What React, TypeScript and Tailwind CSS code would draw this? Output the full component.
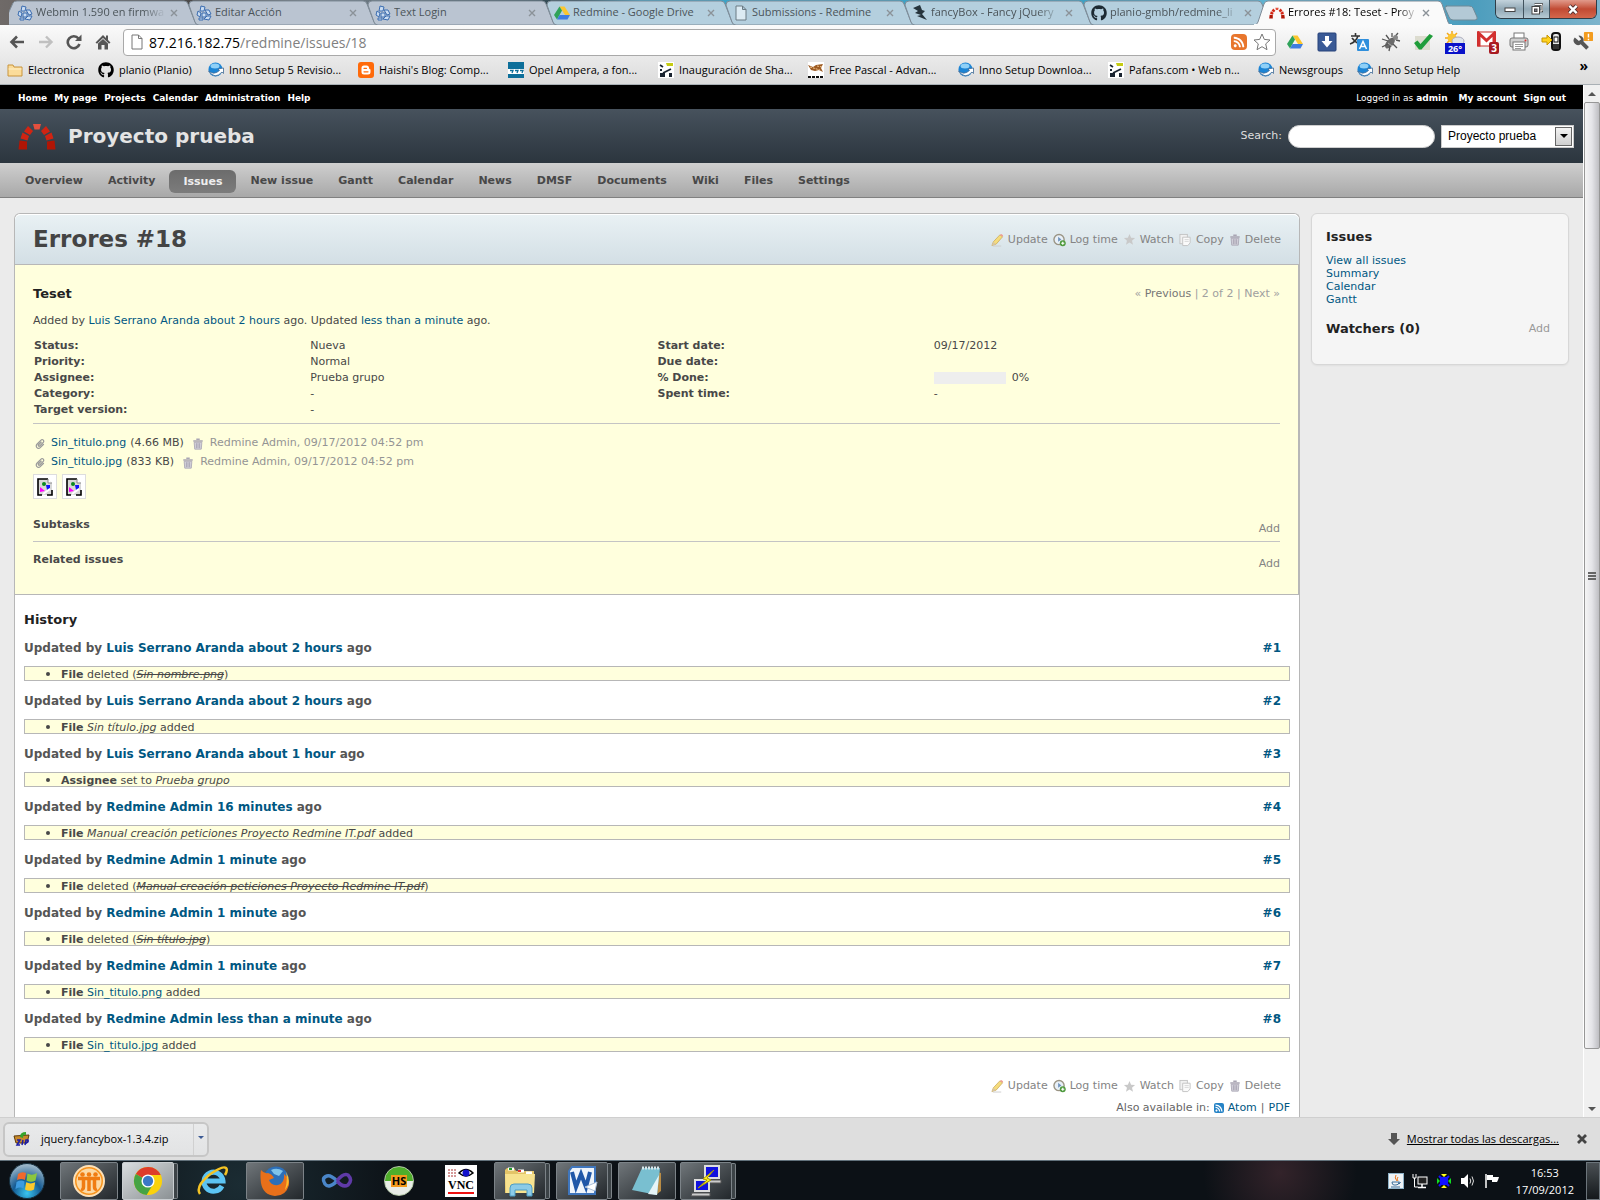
import type { ReactNode } from "react";
import { FaGithub, FaPaperclip, FaRss } from "react-icons/fa";

const UI_FONT = "font-['Open_Sans','Noto_Sans',sans-serif]";
const PAGE_FONT = "font-['DejaVu_Sans',sans-serif]";

type Tab = { title: string; icon: ReactNode; blue?: boolean; fade?: boolean };

const TABS: Tab[] = [
  { title: "Webmin 1.590 en firmwa", icon: <WebminIcon />, fade: true },
  { title: "Editar Acción", icon: <WebminIcon /> },
  { title: "Text Login", icon: <WebminIcon /> },
  { title: "Redmine - Google Drive", icon: <DriveIcon />, blue: true },
  { title: "Submissions - Redmine", icon: <PageIcon />, blue: true },
  { title: "fancyBox - Fancy jQuery", icon: <FancyIcon />, blue: true, fade: true },
  { title: "planio-gmbh/redmine_li", icon: <FaGithub className="h-4 w-4 text-[#1d2a33]" />, blue: true, fade: true },
];

const BOOKMARKS = [
  { label: "Electronica", icon: <FolderIcon />, width: "w-[91px]" },
  { label: "planio (Planio)", icon: <FaGithub className="h-4 w-4 text-black" />, width: "w-[110px]" },
  { label: "Inno Setup 5 Revisio...", icon: <InnoIcon />, width: "w-[150px]" },
  { label: "Haishi's Blog: Comp...", icon: <BloggerIcon />, width: "w-[150px]" },
  { label: "Opel Ampera, a fon...", icon: <AmperaIcon />, width: "w-[150px]" },
  { label: "Inauguración de Sha...", icon: <PafansIcon />, width: "w-[150px]" },
  { label: "Free Pascal - Advan...", icon: <PascalIcon />, width: "w-[150px]" },
  { label: "Inno Setup Downloa...", icon: <InnoIcon />, width: "w-[150px]" },
  { label: "Pafans.com • Web n...", icon: <PafansIcon />, width: "w-[150px]" },
  { label: "Newsgroups", icon: <InnoIcon />, width: "w-[99px]" },
  { label: "Inno Setup Help", icon: <InnoIcon />, width: "w-[110px]" },
];

const MENU = ["Overview", "Activity", "Issues", "New issue", "Gantt", "Calendar", "News", "DMSF", "Documents", "Wiki", "Files", "Settings"];

const HISTORY: { who: string; when: string; detail: ReactNode }[] = [
  { who: "Luis Serrano Aranda", when: "about 2 hours", detail: <><b>File</b> deleted (<del><i>Sin nombre.png</i></del>)</> },
  { who: "Luis Serrano Aranda", when: "about 2 hours", detail: <><b>File</b> <i>Sin título.jpg</i> added</> },
  { who: "Luis Serrano Aranda", when: "about 1 hour", detail: <><b>Assignee</b> set to <i>Prueba grupo</i></> },
  { who: "Redmine Admin", when: "16 minutes", detail: <><b>File</b> <i>Manual creación peticiones Proyecto Redmine IT.pdf</i> added</> },
  { who: "Redmine Admin", when: "1 minute", detail: <><b>File</b> deleted (<del><i>Manual creación peticiones Proyecto Redmine IT.pdf</i></del>)</> },
  { who: "Redmine Admin", when: "1 minute", detail: <><b>File</b> deleted (<del><i>Sin título.jpg</i></del>)</> },
  { who: "Redmine Admin", when: "1 minute", detail: <><b>File</b> <Link>Sin_titulo.png</Link> added</> },
  { who: "Redmine Admin", when: "less than a minute", detail: <><b>File</b> <Link>Sin_titulo.jpg</Link> added</> },
];

export default function App() {
  return (
    <div className={`flex min-h-screen flex-col overflow-hidden bg-[#ebebeb] ${PAGE_FONT}`}>
      <TabStrip />
      <Toolbar />
      <div className="flex flex-1">
        <div className="flex min-w-0 flex-1 flex-col">
          <TopMenu />
          <Header />
          <MainMenu />
          <div className="flex flex-1 items-start gap-[11px] px-[14px] pt-[15px]">
            <Issue />
            <Sidebar />
          </div>
        </div>
        <Scrollbar />
      </div>
      <DownloadShelf />
      <Taskbar />
    </div>
  );
}

/* ---------- browser ---------- */

function TabStrip() {
  return (
    <div
      className={`relative flex h-[25px] bg-[linear-gradient(90deg,#6f6a68_0,#4c4a4a_12%,#77818a_20%,#3f5560_33%,#27414a_36%,#3ea3c6_40%,#3fa0c2_70%,#62b4d2_80%,#4c9dbd_92%,#7db4cc_100%)] ${UI_FONT}`}
    >
      {TABS.map((t, i) => (
        <div key={i} className={`relative h-[25px] w-[179px] shrink-0 ${i === 0 ? "ml-[9px]" : ""}`}>
          <svg viewBox="0 0 190 25" className="absolute left-0 top-0 h-[25px] w-[190px]">
            <path
              d={i === 0 ? "M-6 25 L4 3 Q5 1 8 1 H175 Q178 1 179 4 L186 22 Q187 25 190 25 Z" : "M11 25 Q8 25 7 22 L1 5 Q1 1 5 1 H175 Q178 1 179 4 L186 22 Q187 25 190 25 Z"}
              fill={t.blue ? "#b4cfde" : "#bac4d1"}
              stroke="#7f8c98"
              overflow="visible"
            />
          </svg>
          <div className="relative flex h-[25px] items-center gap-[3px] pl-2 pr-[10px] text-[11px] text-[#4b5459]">
            <span className="w-4 shrink-0">{t.icon}</span>
            <span
              className={`flex-1 overflow-hidden whitespace-nowrap ${t.fade ? "mask-[linear-gradient(90deg,#000_82%,transparent)]" : ""}`}
            >
              {t.title}
            </span>
            <TabClose />
          </div>
        </div>
      ))}
      <div className="relative -ml-2 h-[25px] w-[190px] shrink-0">
        <svg viewBox="0 0 200 25" className="absolute left-0 top-0 h-[25px] w-[200px]">
          <path d="M0 25 Q3 25 4 22 L10 4 Q11 1 14 1 H184 Q187 1 188 4 L194 22 Q195 25 198 25 Z" fill="#fafafa" stroke="#7f8c98" />
          <path d="M0 25 H198" stroke="#fafafa" strokeWidth="2" />
        </svg>
        <div className="relative flex h-[25px] items-center gap-[3px] pl-[15px] pr-[14px] text-[11px] text-black">
          <span className="w-4 shrink-0">
            <RedmineLogo className="h-[14px] w-4" />
          </span>
          <span className="flex-1 overflow-hidden whitespace-nowrap mask-[linear-gradient(90deg,#000_85%,transparent)]">
            Errores #18: Teset - Proy
          </span>
          <TabClose />
        </div>
      </div>
      <button type="button" aria-label="New tab" className="h-[22px]">
        <svg viewBox="0 0 34 22" className="h-[22px] w-[34px]">
          <path d="M2 6 H25 Q28 6 29 8 L33 17 Q34 20 31 20 H9 Q6 20 5 17 L1 8 Q1 6 3 6Z" fill="#b3c9d6" stroke="#6f8a98" />
        </svg>
      </button>
      <div className="ml-auto mr-[3px] flex h-[19px] overflow-hidden rounded-b-md border border-t-0 border-[#2f3d47]">
        <button type="button" aria-label="Minimize" className="flex w-7 items-center justify-center border-r border-[#41525d] bg-linear-to-b from-[#c3d3dc] via-[#92a9b6] to-[#b6cad4]">
          <svg viewBox="0 0 12 12" className="h-3 w-3"><rect x="1" y="5" width="10" height="3.500" fill="#fff" stroke="#444" /></svg>
        </button>
        <button type="button" aria-label="Restore" className="flex w-[26px] items-center justify-center border-r border-[#41525d] bg-linear-to-b from-[#c3d3dc] via-[#92a9b6] to-[#b6cad4]">
          <svg viewBox="0 0 12 12" className="h-3 w-3">
            <path d="M3.500 1.500 H11 V8 H8.500" fill="none" stroke="#444" strokeWidth="2.500" />
            <path d="M3.500 1.500 H11 V8 H8.500" fill="none" stroke="#fff" />
            <rect x="1" y="3.500" width="7.500" height="7.500" fill="#fff" stroke="#444" />
            <rect x="3.500" y="6" width="2.500" height="2.500" fill="#778" stroke="#444" />
          </svg>
        </button>
        <button type="button" aria-label="Close" className="flex w-[46px] items-center justify-center bg-linear-to-b from-[#e19a8b] via-[#c14a33] to-[#d4674c]">
          <svg viewBox="0 0 12 12" className="h-[11px] w-3">
            <path d="M2 2 L10 10 M10 2 L2 10" stroke="#533" strokeWidth="4.500" />
            <path d="M2 2 L10 10 M10 2 L2 10" stroke="#fff" strokeWidth="2.500" />
          </svg>
        </button>
      </div>
    </div>
  );
}

function TabClose() {
  return (
    <button type="button" aria-label="Close tab" className="ml-px">
      <svg viewBox="0 0 8 8" className="h-2 w-2">
        <path d="M1 1 L7 7 M7 1 L1 7" stroke="#8b9298" strokeWidth="1.400" />
      </svg>
    </button>
  );
}

function Toolbar() {
  return (
    <div className={`border-b border-[#a9b0b5] bg-linear-to-b from-[#fafafa] to-[#dcdcdc] ${UI_FONT}`}>
      <div className="flex h-[31px] items-center pt-[3px]">
        <div className="flex w-[123px] shrink-0 items-center justify-between pl-[9px] pr-3">
          <button type="button" aria-label="Back">
            <svg viewBox="0 0 16 16" className="h-4 w-4"><path d="M15 8 H3 M8 2.500 L2.500 8 L8 13.500" fill="none" stroke="#555" strokeWidth="2.600" /></svg>
          </button>
          <button type="button" aria-label="Forward">
            <svg viewBox="0 0 16 16" className="h-4 w-4"><path d="M1 8 H13 M8 2.500 L13.500 8 L8 13.500" fill="none" stroke="#c0c0c0" strokeWidth="2.400" /></svg>
          </button>
          <button type="button" aria-label="Reload">
            <svg viewBox="0 0 16 16" className="h-4 w-4">
              <path d="M12.500 4.500 A6 6 0 1 0 13.500 10" fill="none" stroke="#555" strokeWidth="2.600" />
              <path d="M15.500 0.500 V7 H9 Z" fill="#555" />
            </svg>
          </button>
          <button type="button" aria-label="Home">
            <svg viewBox="0 0 16 16" className="h-4 w-4">
              <path d="M8 1 L0.500 8.500 L2 9.800 L8 4 L14 9.800 L15.500 8.500 L13 6 V1.500 H11 V4 Z" fill="#555" />
              <path d="M3 9.500 L8 5 L13 9.500 V15.500 H9.500 V11 H6.500 V15.500 H3 Z" fill="#555" />
            </svg>
          </button>
        </div>
        <label className="flex h-[27px] min-w-0 flex-1 items-center rounded-sm border border-[#a9a9a9] bg-white pl-[7px] pr-1">
          <svg viewBox="0 0 12 16" className="h-4 w-3 shrink-0">
            <path d="M1 1 H7.500 L11 4.500 V15 H1 Z M7.500 1 V4.500 H11" fill="#fff" stroke="#777" />
          </svg>
          <span className="ml-[6px] text-[14px] text-black">
            87.216.182.75<span className="text-[#808080]">/redmine/issues/18</span>
          </span>
          <input aria-label="Address" className="min-w-0 flex-1 outline-none" />
          <span className="mr-[6px] flex h-4 w-4 items-center justify-center rounded-sm bg-[#e8762d]">
            <FaRss className="h-3 w-3 text-white" />
          </span>
          <svg viewBox="0 0 18 18" className="h-[18px] w-[18px]">
            <path d="M9 1 L11.300 6.400 L17 7 L12.700 10.900 L14 16.700 L9 13.700 L4 16.700 L5.300 10.900 L1 7 L6.700 6.400 Z" fill="#fff" stroke="#777" />
          </svg>
        </label>
        <div className="flex shrink-0 items-center gap-3 pl-[9px] pr-[7px]">
          <Ext><DriveIcon /></Ext>
          <Ext>
            <svg viewBox="0 0 20 20" className="h-5 w-5"><rect x="1" y="1" width="18" height="18" rx="1" fill="#3a5a96" stroke="#27427a" /><path d="M8 4 H12 V9 H15.500 L10 15.500 L4.500 9 H8 Z" fill="#fff" /></svg>
          </Ext>
          <Ext>
            <svg viewBox="0 0 20 20" className="h-5 w-5">
              <path d="M2 4 H11 M6.500 1 V4 M9 4 Q7 10 1 12 M3 6 Q6 10 10 12" fill="none" stroke="#333" strokeWidth="1.600" />
              <rect x="8" y="7" width="12" height="12" rx="1" fill="#2f8fdc" />
              <path d="M10.500 17 L14 9.500 L17.500 17 M12 14.500 H16" fill="none" stroke="#fff" strokeWidth="1.500" />
            </svg>
          </Ext>
          <Ext>
            <svg viewBox="0 0 20 20" className="h-5 w-5">
              <ellipse cx="9" cy="11" rx="3.500" ry="6.500" transform="rotate(40 9 11)" fill="#6a6a6a" />
              <path d="M12 7 L17 1 M11 5 L11 1 M15 8 L19 9 M7 9 L1 7 M7 12 L1 15 M9 14 L8 19 M12 12 L16 16 M8 7 L5 3" stroke="#555" strokeWidth="1.300" fill="none" />
              <circle cx="14.500" cy="5.500" r="2.500" fill="#888" />
              <path d="M7 11 L11 14" stroke="#aaa" />
            </svg>
          </Ext>
          <Ext>
            <svg viewBox="0 0 20 20" className="h-5 w-5"><rect x="2" y="4" width="15" height="14" fill="#dcdccf" /><path d="M1 11 L4.500 8.500 L7.500 12 L16.500 2 L20 4 L8.500 17.500 L6 17.500 Z" fill="#1f9d3a" /></svg>
          </Ext>
          <Ext>
            <span className="relative block h-[22px] w-5">
              <svg viewBox="0 0 20 20" className="h-5 w-5">
                <path d="M7 0 V14 M0 7 H14 M2 2 L12 12 M12 2 L2 12" stroke="#f2a71b" strokeWidth="1.500" />
                <circle cx="7" cy="7" r="4.500" fill="#fbc531" />
                <ellipse cx="13" cy="10" rx="6" ry="4" fill="#dfe5ea" stroke="#aab" />
              </svg>
              <span className="absolute -bottom-px left-0 h-[11px] w-5 bg-[#0a12c9] text-center text-[9px] leading-[11px] font-bold text-white">26°</span>
            </span>
          </Ext>
          <Ext>
            <span className="relative block h-[22px] w-5">
              <svg viewBox="0 0 20 16" className="h-[17px] w-5">
                <rect x="0.500" y="0.500" width="18" height="14" fill="#fff" stroke="#c9302c" />
                <path d="M2 15 V2 L9.500 9 L17 2 V15" fill="none" stroke="#d32f2f" strokeWidth="3" />
              </svg>
              <span className="absolute -bottom-px left-3 h-3 w-[10px] rounded-xs bg-[#a81a22] text-center text-[10px] leading-3 font-bold text-white">3</span>
            </span>
          </Ext>
          <Ext>
            <svg viewBox="0 0 20 20" className="h-5 w-5">
              <rect x="5" y="1" width="10" height="6" fill="#fff" stroke="#777" />
              <rect x="1" y="6" width="18" height="9" rx="2" fill="#d0d0d0" stroke="#777" />
              <rect x="4" y="10" width="12" height="8" fill="#fff" stroke="#777" />
              <path d="M6 12.500 H14 M6 14.500 H14 M6 16.500 H12" stroke="#999" />
              <circle cx="16.500" cy="8.500" r="1" fill="#d33" />
            </svg>
          </Ext>
          <Ext>
            <svg viewBox="0 0 20 20" className="h-5 w-5">
              <rect x="11" y="1" width="8" height="17" rx="3" fill="#e8e8e8" stroke="#111" strokeWidth="2" />
              <rect x="13" y="5" width="4" height="5" fill="#fff" stroke="#111" />
              <path d="M12 12 H18 V17 H12 Z" fill="#333" />
              <path d="M1 6 H6 V3 L11 8 L6 13 V10 H1 Z" fill="#ffd21e" stroke="#c79500" />
            </svg>
          </Ext>
          <Ext>
            <svg viewBox="0 0 22 22" className="h-[22px] w-[22px]">
              <path d="M2 6 A5 5 0 0 0 8.500 13.500 L14.500 19.500 L17.500 16.500 L11.500 10.500 A5 5 0 0 0 6 4 L9 8 L6.500 10 Z" fill="#555" />
              <rect x="12" y="0" width="10" height="10" rx="1" fill="#f39c1f" />
              <path d="M17 2 V6 M17 7.500 V9" stroke="#fff" strokeWidth="1.600" />
            </svg>
          </Ext>
        </div>
      </div>
      <nav className="flex h-[28px] items-center pl-[7px] text-[11px] text-black">
        {BOOKMARKS.map((b, i) => (
          <a key={i} href="#" className={`flex shrink-0 items-center gap-[5px] whitespace-nowrap ${b.width}`}>
            <span className="w-4 shrink-0">{b.icon}</span>
            {b.label}
          </a>
        ))}
        <button type="button" className="ml-auto mr-3 pb-2 text-[14px] leading-none font-bold">»</button>
      </nav>
    </div>
  );
}

function Ext({ children }: { children: ReactNode }) {
  return (
    <button type="button" aria-label="Extension" className="flex h-[22px] w-5 items-center justify-center">
      {children}
    </button>
  );
}

function Scrollbar() {
  return (
    <div className="flex w-[17px] shrink-0 flex-col border-l border-white bg-[#f0f0f0]">
      <div className="flex h-[17px] items-center justify-center">
        <svg viewBox="0 0 8 4" className="h-1 w-2"><path d="M0 4 L4 0 L8 4 Z" fill="#555" /></svg>
      </div>
      <div className="mb-[51px] flex flex-1 items-center justify-center rounded-xs border border-[#979797] bg-linear-to-r from-[#f5f5f5] via-[#e4e4e8] to-[#bebec2]">
        <div className="flex w-2 flex-col gap-px">
          <span className="h-[2px] bg-[#666]" />
          <span className="h-[2px] bg-[#666]" />
          <span className="h-[2px] bg-[#666]" />
        </div>
      </div>
      <div className="flex h-[17px] items-center justify-center">
        <svg viewBox="0 0 8 4" className="h-1 w-2"><path d="M0 0 L4 4 L8 0 Z" fill="#555" /></svg>
      </div>
    </div>
  );
}

/* ---------- redmine ---------- */

function Link({ children }: { children: ReactNode }) {
  return (
    <a href="#" className="text-[#005782]">
      {children}
    </a>
  );
}

function TopMenu() {
  return (
    <div className="flex h-6 items-center justify-between bg-black pt-[3px] pl-[18px] pr-[17px] text-[9px] text-white">
      <nav className="flex gap-[7px] font-bold">
        {["Home", "My page", "Projects", "Calendar", "Administration", "Help"].map((m) => (
          <a key={m} href="#">{m}</a>
        ))}
      </nav>
      <div className="flex gap-[7px] font-bold">
        <span className="mr-1 font-normal">
          Logged in as <a href="#" className="font-bold">admin</a>
        </span>
        <a href="#">My account</a>
        <a href="#">Sign out</a>
      </div>
    </div>
  );
}

function Header() {
  return (
    <header className="flex h-[54px] items-center justify-between bg-linear-to-b from-[#47525d] to-[#2b353e] pl-[18px] pr-[9px]">
      <div className="flex items-center gap-3">
        <RedmineLogo className="h-[27px] w-[38px]" />
        <h1 className="text-[20px] leading-6 font-bold text-[#e4e4e4]">Proyecto prueba</h1>
      </div>
      <div className="flex items-center text-[11px] text-[#dedede]">
        <label htmlFor="q" className="mr-[6px]">Search:</label>
        <input id="q" className="mr-[6px] h-[23px] w-[147px] rounded-full border border-[#cfcfcf] bg-white px-3 text-black outline-none" />
        <div className="relative">
          <select
            aria-label="Project"
            className="h-[23px] w-[133px] appearance-none rounded-none border border-[#ccc] bg-white pl-[6px] font-['Liberation_Sans',sans-serif] text-[12px] text-black"
          >
            <option>Proyecto prueba</option>
          </select>
          <span className="pointer-events-none absolute right-[2px] top-[2px] flex h-[19px] w-[17px] items-center justify-center border border-[#666] bg-linear-to-b from-[#f3f3f3] to-[#cfcfcf]">
            <svg viewBox="0 0 8 4" className="h-1 w-2"><path d="M0 0 H8 L4 4 Z" fill="#000" /></svg>
          </span>
        </div>
      </div>
    </header>
  );
}

function MainMenu() {
  return (
    <nav className="flex h-[35px] items-center gap-[3px] border-b border-[#808080] bg-linear-to-b from-[#cfcfcf] to-[#a8a8a8] pt-[2px] pl-[14px] text-[11px] font-bold text-[#484848]">
      {MENU.map((m) => (
        <a
          key={m}
          href="#"
          className={
            m === "Issues"
              ? "rounded-md bg-linear-to-b from-[#6c6c6c] to-[#7c7c7c] px-[14px] pt-1 pb-[3px] leading-4 text-[#eee]"
              : "px-[11px] leading-4"
          }
        >
          {m}
        </a>
      ))}
    </nav>
  );
}

function Actions() {
  return (
    <div className="flex items-center gap-[5px] text-[11px] leading-4 text-[#848484]">
      <a href="#" className="flex items-center gap-1"><PencilIcon />Update</a>
      <a href="#" className="flex items-center gap-1"><ClockIcon />Log time</a>
      <a href="#" className="flex items-center gap-1"><StarIcon />Watch</a>
      <a href="#" className="flex items-center gap-1"><CopyIcon />Copy</a>
      <a href="#" className="flex items-center gap-1"><TrashIcon />Delete</a>
    </div>
  );
}

function Issue() {
  return (
    <main className="min-w-0 flex-1 self-stretch rounded-t-md border border-b-0 border-[#b7b7b7] bg-white text-[11px] text-[#484848]">
      <div className="flex h-[50px] items-center justify-between rounded-t-md border-t border-white bg-linear-to-b from-[#e9f1f4] to-[#d3dfe5] px-[18px]">
        <h2 className="text-[23px] font-bold text-[#444]">Errores #18</h2>
        <Actions />
      </div>
      <section className="border-y border-r border-[#b7b7b7] bg-[#ffffdd] px-[18px] pt-[19px] pb-[22px]">
        <div className="flex items-center justify-between leading-5">
          <h3 className="text-[13px] font-bold text-[#222]">Teset</h3>
          <p className="text-[#a0a0a0]">
            « <a href="#" className="text-[#777]">Previous</a> | 2 of 2 | Next »
          </p>
        </div>
        <p className="mt-[9px] leading-4">
          Added by <Link>Luis Serrano Aranda</Link> <Link>about 2 hours</Link> ago. Updated{" "}
          <Link>less than a minute</Link> ago.
        </p>
        <table className="mt-[9px] w-full table-fixed leading-4">
          <tbody>
            <Attr a="Status:" av="Nueva" b="Start date:" bv="09/17/2012" />
            <Attr a="Priority:" av="Normal" b="Due date:" bv="" />
            <Attr
              a="Assignee:"
              av="Prueba grupo"
              b="% Done:"
              bv={
                <span className="flex items-center gap-[6px]">
                  <span className="h-3 w-[72px] bg-[#eee]" />
                  0%
                </span>
              }
            />
            <Attr a="Category:" av="-" b="Spent time:" bv="-" />
            <Attr a="Target version:" av="-" />
          </tbody>
        </table>
        <hr className="mt-[5px] border-[#c4c4c4]" />
        <div className="mt-[10px]">
          <Attachment name="Sin_titulo.png" size="(4.66 MB)" />
          <Attachment name="Sin_titulo.jpg" size="(833 KB)" />
        </div>
        <div className="mt-[2px] flex gap-[5px]">
          <Thumb />
          <Thumb />
        </div>
        <div className="mt-[18px] flex justify-between leading-4">
          <strong>Subtasks</strong>
          <a href="#" className="mt-1 text-[#848484]">Add</a>
        </div>
        <hr className="mt-1 border-[#c4c4c4]" />
        <div className="mt-[10px] flex justify-between leading-4">
          <strong>Related issues</strong>
          <a href="#" className="mt-1 text-[#848484]">Add</a>
        </div>
      </section>
      <section className="px-[9px] pt-[15px]">
        <h3 className="text-[13px] leading-5 font-bold text-[#222]">History</h3>
        <div className="mt-[10px] flex flex-col gap-3">
          {HISTORY.map((h, i) => (
            <article key={i}>
              <h4 className="flex justify-between pr-[9px] text-[12px] leading-4 font-bold text-[#555]">
                <span>
                  Updated by <Link>{h.who}</Link> <Link>{h.when}</Link> ago
                </span>
                <Link>#{i + 1}</Link>
              </h4>
              <ul className="mt-[10px] list-disc border border-[#b7b7b7] bg-[#ffffdd] pl-9 leading-[13px]">
                <li className="h-[13px] marker:text-[14px]">{h.detail}</li>
              </ul>
            </article>
          ))}
        </div>
        <div className="mt-[26px] flex justify-end pr-[9px]">
          <Actions />
        </div>
        <p className="mt-[6px] flex items-center justify-end gap-1 text-[#666] leading-4">
          Also available in:
          <span className="flex h-[10px] w-[10px] items-center justify-center rounded-xs bg-[#2683c6]">
            <FaRss className="h-2 w-2 text-white" />
          </span>
          <Link>Atom</Link> | <Link>PDF</Link>
        </p>
      </section>
    </main>
  );
}

function Attr({ a, av, b, bv }: { a: string; av: ReactNode; b?: string; bv?: ReactNode }) {
  return (
    <tr>
      <th className="w-[22%] pl-px text-left font-bold">{a}</th>
      <td className="w-[28%] pl-[3px]">{av}</td>
      <th className="w-[22%] pl-px text-left font-bold">{b}</th>
      <td className="w-[28%] pl-[3px]">{bv}</td>
    </tr>
  );
}

function Attachment({ name, size }: { name: string; size: string }) {
  return (
    <p className="flex h-[19px] items-center pl-[2px]">
      <FaPaperclip className="mr-[6px] h-[10px] w-[10px] text-[#999]" />
      <Link>{name}</Link>
      <span className="ml-1 mr-2">{size}</span>
      <TrashIcon />
      <span className="ml-[6px] text-[#949494]">Redmine Admin, 09/17/2012 04:52 pm</span>
    </p>
  );
}

function Thumb() {
  return (
    <span className="flex h-[25px] w-6 items-center justify-center border border-[#ddd] bg-white">
      <svg viewBox="0 0 16 18" className="h-[18px] w-4">
        <path d="M1 1 H11 L15 5 V17 H1 Z" fill="#d8d8d8" />
        <path d="M4 1 H1 V17 H5 M11 1 H4 M10 17 H15 V12" fill="none" stroke="#000" strokeWidth="1.600" />
        <path d="M11 1 V5 H15" fill="#fff" stroke="#888" />
        <circle cx="7" cy="6" r="2" fill="#0a8a1f" />
        <path d="M3 14 V9 L8 13 Z" fill="#f0f" />
        <path d="M9 7 H13 V10 L10 12 Z" fill="#11f" />
        <path d="M6 16 L13 11" stroke="#fff" strokeWidth="2" />
      </svg>
    </span>
  );
}

function Sidebar() {
  return (
    <aside className="w-[258px] shrink-0 rounded-md border border-[#d7d7d7] bg-[#f5f5f5] pt-[13px] pr-[18px] pb-[25px] pl-[14px] text-[11px] shadow-xs">
      <h3 className="text-[13px] leading-5 font-bold text-[#222]">Issues</h3>
      <div className="mt-[7px] flex flex-col items-start leading-[13px]">
        <Link>View all issues</Link>
        <Link>Summary</Link>
        <Link>Calendar</Link>
        <Link>Gantt</Link>
      </div>
      <div className="mt-[13px] flex items-center justify-between leading-5">
        <h3 className="text-[13px] font-bold text-[#222]">Watchers (0)</h3>
        <a href="#" className="text-[#999]">Add</a>
      </div>
    </aside>
  );
}

/* ---------- desktop ---------- */

function DownloadShelf() {
  return (
    <div className={`flex h-[43px] items-center justify-between border-t border-[#cfcfcf] bg-[#dedede] pl-[3px] pr-3 text-[11px] text-black ${UI_FONT}`}>
      <div className="flex h-[35px] w-[206px] items-center rounded-md border-2 border-[#c6c6c6] bg-linear-to-b from-[#e9eaeb] to-[#e2e3e4] pl-2">
        <svg viewBox="0 0 18 16" className="h-4 w-[18px]">
          <path d="M1 5 L16 4 L14 12 H3 Z" fill="#c98a2b" stroke="#5b3a0c" />
          <path d="M7 6 Q7 1 13 1 V4 Q10 3 10 7 Z" fill="#36a52b" />
          <path d="M4 9 H7 L4 14 H7 M10 9 L9 14 M12 14 L13 9 H15 Q16 11 13 12" fill="none" stroke="#1c1ca8" strokeWidth="1.500" />
        </svg>
        <span className="ml-[10px] flex-1">jquery.fancybox-1.3.4.zip</span>
        <button type="button" aria-label="Options" className="flex h-full w-[14px] justify-center border-l border-[#d0d0d0] pt-3">
          <svg viewBox="0 0 6 3" className="h-[3px] w-[6px]"><path d="M0 0 H6 L3 3 Z" fill="#3c5a94" /></svg>
        </button>
      </div>
      <div className="flex items-center">
        <svg viewBox="0 0 12 12" className="h-3 w-3"><path d="M3 0 H9 V6 H12 L6 12 L0 6 H3 Z" fill="#555" /></svg>
        <a href="#" className="ml-[7px] underline">Mostrar todas las descargas...</a>
        <button type="button" aria-label="Close shelf" className="mr-px ml-[18px]">
          <svg viewBox="0 0 10 10" className="h-[10px] w-[10px]"><path d="M1 1 L9 9 M9 1 L1 9" stroke="#444" strokeWidth="2.800" /></svg>
        </button>
      </div>
    </div>
  );
}

function Slot({ open, active, stack, children }: { open?: boolean; active?: boolean; stack?: boolean; children: ReactNode }) {
  const fill = active
    ? "border-[#c9ced1] bg-linear-to-br from-[#d9dddf] to-[#8b9194]"
    : open
      ? "border-[#7c8388] bg-linear-to-br from-[#70767a] to-[#23282c]"
      : "border-transparent";
  return (
    <div className="flex h-[38px] w-[62px] shrink-0">
      <button type="button" className={`flex items-center justify-center rounded-xs border ${stack ? "w-[52px]" : "w-[58px]"} ${fill}`}>
        {children}
      </button>
      {stack && <span className="my-px w-1 rounded-r-xs border border-l-0 border-[#7c8388] bg-[#3c4347]" />}
    </div>
  );
}

function Taskbar() {
  return (
    <div className="flex h-10 items-center border-t border-[#62717b] bg-[#0c1116] bg-[radial-gradient(circle_at_80%_30%,#33232a_0,transparent_6%),radial-gradient(circle_at_15%_60%,#1b2c33_0,transparent_12%)] text-white">
      <button type="button" aria-label="Start" className="flex w-[60px] shrink-0 items-center pl-2">
        <svg viewBox="0 0 38 38" className="h-[38px] w-[38px]">
          <defs>
            <radialGradient id="orb" cx="50%" cy="85%" r="80%">
              <stop offset="0" stopColor="#39c5f0" /><stop offset="0.500" stopColor="#155b93" /><stop offset="1" stopColor="#9ab4c6" />
            </radialGradient>
          </defs>
          <circle cx="19" cy="19" r="17.500" fill="url(#orb)" stroke="#16303f" />
          <path d="M10 12 Q14 9 18 11 L17 18 Q13 16 9 18 Z" fill="#f0692c" />
          <path d="M19.500 11.500 Q24 14 29 11 L27.500 18.500 Q23 21 18.500 18.500 Z" fill="#8cc63e" />
          <path d="M8.500 20 Q13 17.500 16.500 19.500 L15.500 26.500 Q12 24.500 7.500 27 Z" fill="#3d9be0" />
          <path d="M18.200 20.300 Q22.500 22.500 27.200 20.300 L26 27.500 Q21.500 30 17 27.500 Z" fill="#fcc92c" />
        </svg>
      </button>
      <Slot open>
        <svg viewBox="0 0 32 32" className="h-8 w-8">
          <circle cx="16" cy="16" r="15" fill="#f7941e" stroke="#fde1b8" strokeWidth="2" />
          <circle cx="16" cy="16" r="12.500" fill="#fcd9a4" />
          <g fill="#f07c12"><circle cx="9.500" cy="9.500" r="2.300" /><circle cx="16" cy="9.500" r="2.300" /><circle cx="22.500" cy="9.500" r="2.300" /></g>
          <path d="M5 13.500 H27 M10.500 13 V22 Q10.500 25 8 24 M16 13 V26 M21.500 13 V22 Q21.500 25 24 24" stroke="#f07c12" strokeWidth="3.500" fill="none" />
        </svg>
      </Slot>
      <Slot open active stack>
        <svg viewBox="0 0 32 32" className="h-[30px] w-[30px]">
          <circle cx="16" cy="16" r="15" fill="#fbd20b" />
          <path d="M16 16 L3 8.500 A15 15 0 0 1 29.500 9.500 H16 Z" fill="#dd3c2b" />
          <path d="M16 16 L3 8.500 A15 15 0 0 0 14.500 31 L21 20 Z" fill="#45a344" />
          <circle cx="16" cy="16" r="7" fill="#fff" /><circle cx="16" cy="16" r="5.500" fill="#3b78c6" />
        </svg>
      </Slot>
      <Slot>
        <svg viewBox="0 0 32 32" className="h-8 w-8">
          <path d="M25 21 A9.500 9.500 0 1 1 26 16 H9" fill="none" stroke="#5cc4f3" strokeWidth="5" />
          <path d="M3 29 Q-2 22 12 10 Q26 0 29 3 Q31 5 28 10" fill="none" stroke="#f4c324" strokeWidth="2.500" />
        </svg>
      </Slot>
      <Slot open>
        <svg viewBox="0 0 32 32" className="h-8 w-8">
          <circle cx="17" cy="14" r="12.500" fill="#2c6fb8" /><path d="M12 5 Q18 2 24 6 L20 11 L15 9 Z" fill="#7fc3ea" />
          <path d="M2 5 Q5 9 9 8 Q13 9 15 13 L10 15 Q12 21 19 20 Q26 18 25 9 Q31 14 30 20 Q27 31 16 31 Q4 30 2 18 Q1 10 2 5 Z" fill="#e8701a" />
          <path d="M27 7 Q33 17 26 25 Q29 15 27 7 Z" fill="#fbbf2d" />
        </svg>
      </Slot>
      <Slot>
        <svg viewBox="0 0 32 18" className="h-[18px] w-8">
          <path d="M16 9 Q8 17 4 12 Q0 6 6 4 Q10 3 16 9" fill="none" stroke="#4a86c9" strokeWidth="3.500" />
          <path d="M16 9 Q22 1 27 3 Q32 8 27 13 Q22 16 16 9" fill="none" stroke="#5f3aa8" strokeWidth="3.500" />
        </svg>
      </Slot>
      <Slot>
        <span className="flex h-[30px] w-[30px] items-center justify-center rounded-full border border-[#b5c9a8] bg-linear-to-b from-[#4fae2b] from-50% to-[#e8ece6] to-50%">
          <span className="bg-[#f39a1b] px-px font-['Open_Sans',sans-serif] text-[11px] leading-3 font-bold text-black">HS</span>
        </span>
      </Slot>
      <Slot>
        <span className="flex h-8 w-8 flex-col items-center bg-white">
          <svg viewBox="0 0 32 14" className="h-[14px] w-8">
            <path d="M3 5 H12 M3 8 H12 M3 11 H12" stroke="#a33" strokeDasharray="2 1" />
            <path d="M14 8 Q21 1 28 8 Q21 14 14 8 Z" fill="#fff" stroke="#000" strokeWidth="1.500" /><circle cx="21" cy="8" r="3.500" fill="#11c" />
          </svg>
          <span className="border-b-2 border-[#e11] font-['Liberation_Serif',serif] text-[12px] leading-[13px] font-bold text-black">VNC</span>
        </span>
      </Slot>
      <Slot open stack>
        <svg viewBox="0 0 32 32" className="h-8 w-8">
          <path d="M1 5 L3 3 H10 L12 6 H30 V28 H1 Z" fill="#e3c468" />
          <path d="M4 4 H10 M14 6 H20 M22 8 H28" stroke="#fff" strokeWidth="3" /><path d="M5 4 H8" stroke="#1c9c2c" strokeWidth="2" /><path d="M14 6 H17" stroke="#d33" strokeWidth="2" />
          <path d="M1 9 H31 L30 28 H2 Z" fill="#f7e28f" />
          <path d="M6 31 V23 Q6 19 10 19 H24 Q28 19 28 23 V31 H23 V25 H11 V31 Z" fill="#8ccbe8" stroke="#4d9cc4" />
        </svg>
      </Slot>
      <Slot open stack>
        <svg viewBox="0 0 32 32" className="h-8 w-8">
          <path d="M6 2 H29 V29 H3 V6 Z" fill="#eef4fb" stroke="#3f76bd" strokeWidth="2" />
          <path d="M6 7 L10 22 L15 9 L20 22 L24 7" fill="none" stroke="#1f57a8" strokeWidth="4" />
          <path d="M19 22 L31 17 L29 26 Z" fill="#fff" stroke="#a9bdd6" />
        </svg>
      </Slot>
      <Slot open>
        <svg viewBox="0 0 32 32" className="h-8 w-8">
          <path d="M12 3 L28 4 L26 29 L30 26 L30 8" fill="#b98c45" />
          <path d="M11 3 H29 L26 30 L1 25 Z" fill="#79bfd0" /><path d="M17 29 L26 30 L28 10 Z" fill="#e6f4f7" />
          <path d="M11 3 H29" stroke="#d8e8ec" strokeWidth="3" strokeDasharray="2 1" />
        </svg>
      </Slot>
      <Slot open stack>
        <svg viewBox="0 0 32 32" className="h-8 w-8">
          <rect x="15" y="1" width="14" height="12" fill="#11d" stroke="#ddd" strokeWidth="2" /><path d="M15 15 H31 V18 H14 Z" fill="#ccc" stroke="#555" />
          <rect x="5" y="15" width="14" height="11" fill="#11d" stroke="#ddd" strokeWidth="2" /><path d="M2 28 H20 V31 H1 Z" fill="#ccc" stroke="#555" />
          <path d="M24 5 L13 14 L17 15 L8 23 L21 15 L17 13 Z" fill="#ffee1c" stroke="#aa9a00" />
        </svg>
      </Slot>
      <div className="ml-auto flex items-center gap-2">
        <span className="flex h-4 w-4 items-center justify-center border border-[#8fb3c9] bg-[#eef3f6]">
          <svg viewBox="0 0 14 14" className="h-[14px] w-[14px]"><path d="M7 1 Q5 4 8 7 M9 3 Q7 5 9 7" fill="none" stroke="#e8761e" /><path d="M3 8 H10 Q10 11 7 11 H5 Q3 11 3 8 M2 13 H11 M10 8 Q13 8 10 10" fill="none" stroke="#3d6f9b" /></svg>
        </span>
        <svg viewBox="0 0 16 16" className="h-4 w-4"><path d="M1 1 V5 H4 V1 M2.500 5 V14 H6" fill="none" stroke="#fff" /><rect x="6" y="4" width="9" height="7" fill="#222" stroke="#fff" /><path d="M10 11 V14 M6 14.500 H14" stroke="#fff" strokeWidth="1.500" /></svg>
        <svg viewBox="0 0 16 16" className="h-4 w-4">
          <rect x="4" y="4" width="8" height="8" fill="#11f" /><path d="M5 1 H11 L8 4 Z M5 15 H11 L8 12 Z" fill="#ff1" /><path d="M1 5 V11 L4 8 Z M15 5 V11 L12 8 Z" fill="#1d2" />
          <path d="M3 3 L6 6 M13 3 L10 6 M3 13 L6 10 M13 13 L10 10" stroke="#11f" strokeWidth="2" />
        </svg>
        <svg viewBox="0 0 16 16" className="h-4 w-4"><path d="M1 5 H4 L8 1 V15 L4 11 H1 Z" fill="#fff" /><path d="M10 5.500 Q11.500 8 10 10.500 M12 3.500 Q15 8 12 12.500" fill="none" stroke="#ddd" /></svg>
        <svg viewBox="0 0 16 16" className="h-4 w-4"><path d="M2 1 V15" stroke="#fff" strokeWidth="1.500" /><path d="M3 2 H9 V4 H15 L14 7 L13 9 H8 V7 H3 Z" fill="#fff" /></svg>
        <div className={`ml-2 mr-1 text-center text-[11px] leading-[17px] ${UI_FONT}`}>
          <p>16:53</p>
          <p>17/09/2012</p>
        </div>
        <button type="button" aria-label="Show desktop" className="h-[38px] w-[14px] border border-[#6c757b] bg-linear-to-b from-[#4a5054] to-[#15191c]" />
      </div>
    </div>
  );
}

/* ---------- icons ---------- */

function RedmineLogo({ className }: { className: string }) {
  return (
    <svg viewBox="0 0 38 27" className={className}>
      <path d="M1.500 17.500 L9 18.500 L9 26.500 H0.500 Z" fill="#b11505" />
      <path d="M4.500 9.500 L11 13 L9.500 17.500 L2.500 15.500 Z" fill="#d22412" />
      <path d="M10 3 L15 8 L12 12 L6 8.500 Z" fill="#d22412" />
      <path d="M15 1 H23 L21.500 6.500 H16.500 Z" fill="#e4503e" />
      <path d="M28 3 L23 8 L26 12 L32 8.500 Z" fill="#d22412" />
      <path d="M33.500 9.500 L27 13 L28.500 17.500 L35.500 15.500 Z" fill="#d22412" />
      <path d="M36.500 17.500 L29 18.500 L29 26.500 H37.500 Z" fill="#b11505" />
    </svg>
  );
}

function WebminIcon() {
  return (
    <svg viewBox="0 0 16 16" className="h-4 w-4">
      <path d="M5 1 L9 2 L8 6 L4 6 Z M9 5 L13 5 L15 9 L12 10 Z M2 6 L5 8 L4 12 L1 10 Z M6 8 L10 8 L10 12 L6 12 Z M11 11 L15 11 L13 15 L8 14 Z M3 13 L7 13 L7 15 L3 15 Z" fill="#c9dcf2" stroke="#3a6cb0" />
    </svg>
  );
}

function DriveIcon() {
  return (
    <svg viewBox="0 0 16 16" className="h-4 w-4">
      <path d="M5.500 1.500 H10.500 L16 10 H11 Z" fill="#fcc62d" />
      <path d="M5.500 1.500 L8 5.500 L3 14.500 L0 10 Z" fill="#2fa35a" />
      <path d="M5.500 10 H16 L13.500 14.500 H3 Z" fill="#3f7de0" />
    </svg>
  );
}

function PageIcon() {
  return (
    <svg viewBox="0 0 16 16" className="h-4 w-4">
      <path d="M3 1 H9.500 L13 4.500 V15 H3 Z M9.500 1 V4.500 H13" fill="#dcebf3" stroke="#6b7a83" />
    </svg>
  );
}

function FancyIcon() {
  return (
    <svg viewBox="0 0 16 16" className="h-4 w-4">
      <path d="M1 3 L8 0 L10 5 L13 6 L10 9 L15 15 L5 11 L9 10 L3 8 L6 6 Z" fill="#26343c" />
    </svg>
  );
}

function FolderIcon() {
  return (
    <svg viewBox="0 0 16 16" className="h-4 w-4">
      <path d="M1 3 H6 L7 5 H15 V14 H1 Z" fill="#fbdc9a" stroke="#c8943c" />
      <path d="M1.500 7 H14.500" stroke="#fff0c8" />
    </svg>
  );
}

function InnoIcon() {
  return (
    <svg viewBox="0 0 16 16" className="h-4 w-4">
      <circle cx="7.500" cy="7.500" r="7" fill="#1c84d4" />
      <ellipse cx="7" cy="4" rx="4.500" ry="2.500" fill="#8fd0f7" />
      <path d="M0.500 9 Q6 13.500 11.500 8.500 L10 7 L15.500 6 L15.500 11.500 L14 10 Q7 18 0.500 9 Z" fill="#fff" stroke="#3f6a94" strokeWidth="0.800" />
    </svg>
  );
}

function BloggerIcon() {
  return (
    <svg viewBox="0 0 16 16" className="h-4 w-4">
      <rect width="16" height="16" rx="3" fill="#ff6a0a" />
      <path d="M6 3.500 H8.500 Q11 3.500 11 6 Q11 7 12.500 7.500 V10 Q12.500 12.500 10 12.500 H6 Q3.500 12.500 3.500 10 V6 Q3.500 3.500 6 3.500 Z" fill="#fff" />
      <path d="M6 6.300 H8.500 M6 9.800 H10" stroke="#ff6a0a" strokeWidth="1.300" strokeLinecap="round" />
    </svg>
  );
}

function AmperaIcon() {
  return (
    <svg viewBox="0 0 16 16" className="h-4 w-4">
      <rect width="16" height="16" fill="#0d6f9a" />
      <path d="M0 7 H16 V12 H0 Z" fill="#fff" />
      <path d="M2 8.500 H5 L4 11 M7 8.500 H10 L9 11 M12 8.500 H15 L14 11" fill="none" stroke="#0d6f9a" strokeWidth="1.300" />
    </svg>
  );
}

function PafansIcon() {
  return (
    <svg viewBox="0 0 16 16" className="h-4 w-4">
      <rect width="16" height="16" fill="#fff" />
      <path d="M8 1 H15 V4 H9 Z" fill="#c5cc12" />
      <path d="M2 3 L5 5 M2 8 H4 M5 11 L13 7" stroke="#1a2430" strokeWidth="1.800" />
      <path d="M2 11 H7 V15 H2 Z M11 11 H14 V15 H11 Z" fill="#1a2430" />
    </svg>
  );
}

function PascalIcon() {
  return (
    <svg viewBox="0 0 16 16" className="h-4 w-4">
      <rect width="16" height="16" fill="#fff" />
      <path d="M0 3 L5 5 L8 3 L15 2 L13 6 L15 10 L11 8 L7 9 L3 8 Z" fill="#9c5a22" />
      <path d="M2 5 L12 8 M9 4 L14 5" stroke="#f0c48c" strokeDasharray="2 1" />
      <path d="M0 15 H16" stroke="#111" strokeWidth="2" strokeDasharray="3 1" />
    </svg>
  );
}

function PencilIcon() {
  return (
    <svg viewBox="0 0 14 14" className="h-[14px] w-[13px]">
      <path d="M1 13 L2.500 9 L9.500 1.500 L12.500 3.500 L5.500 11.500 Z" fill="#f5dc7c" stroke="#c9a958" strokeWidth="0.800" />
      <path d="M9.500 1.500 L11 0.500 L13 2 L12.500 3.500 Z" fill="#ee9b92" />
      <path d="M1 13 L2.500 9 L5.500 11.500 Z" fill="#d9c6a3" />
      <path d="M2 13.500 H11" stroke="#ccc" />
    </svg>
  );
}

function ClockIcon() {
  return (
    <svg viewBox="0 0 14 14" className="h-[14px] w-[13px]">
      <circle cx="6.500" cy="6.500" r="5.500" fill="#e8f0f8" stroke="#9a9484" strokeWidth="1.500" />
      <path d="M5.500 3.500 V9 L9 6.500 Z" fill="#6f93bd" />
      <circle cx="10.500" cy="10.500" r="3.200" fill="#4f9a3e" />
      <path d="M10.500 8.800 V12.200 M8.800 10.500 H12.200" stroke="#fff" strokeWidth="1.300" />
    </svg>
  );
}

function StarIcon() {
  return (
    <svg viewBox="0 0 14 14" className="h-[13px] w-[13px]">
      <path d="M7 1 L8.700 5.200 L13 5.500 L9.700 8.300 L10.800 12.700 L7 10.300 L3.200 12.700 L4.300 8.300 L1 5.500 L5.300 5.200 Z" fill="#c9c9c9" />
    </svg>
  );
}

function CopyIcon() {
  return (
    <svg viewBox="0 0 14 14" className="h-[14px] w-[13px]">
      <rect x="1" y="1" width="8" height="10" fill="#f1f1f1" stroke="#c3c3c3" />
      <path d="M4 4 H12 V10 L9.500 13 H4 Z" fill="#fafafa" stroke="#c3c3c3" />
      <path d="M6 6.500 H10.500 M6 8.500 H10.500" stroke="#d8d8d8" />
    </svg>
  );
}

function TrashIcon() {
  return (
    <svg viewBox="0 0 14 14" className="h-3 w-3">
      <path d="M5 1.500 H9 M1.500 3.500 H12.500" stroke="#a9a5b3" strokeWidth="1.600" />
      <path d="M2.500 5 H11.500 L10.800 13 H3.200 Z" fill="#dcdae2" stroke="#a9a5b3" />
      <path d="M5 6 V12 M7 6 V12 M9 6 V12" stroke="#9a96a6" />
    </svg>
  );
}
